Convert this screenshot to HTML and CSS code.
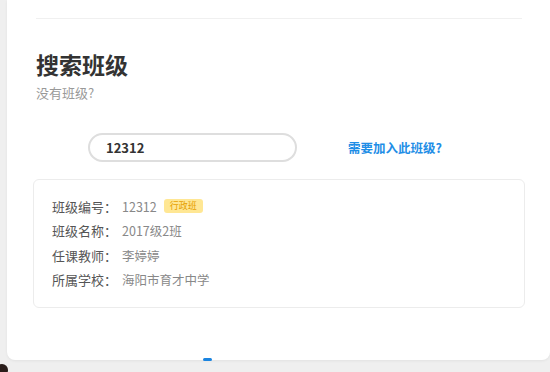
FILE: index.html
```html
<!DOCTYPE html>
<html lang="zh-CN">
<head>
    <meta charset="UTF-8">
    <title>搜索班级</title>
    <link rel="stylesheet" href="styles.css">
</head>
<body>
    <div class="panel">
        <div class="divider"></div>

        <h1 class="search-title">搜索班级</h1>
        <p class="search-subtitle">没有班级?</p>

        <div class="search-row">
            <input class="search-input" type="text" value="12312">
            <a class="join-link" href="#">需要加入此班级?</a>
        </div>

        <div class="class-info">
            <div class="info-row">
                <span class="info-label">班级编号：</span>
                <span class="info-value">12312</span>
                <span class="tag">行政班</span>
            </div>
            <div class="info-row">
                <span class="info-label">班级名称：</span>
                <span class="info-value">2017级2班</span>
            </div>
            <div class="info-row">
                <span class="info-label">任课教师：</span>
                <span class="info-value">李婷婷</span>
            </div>
            <div class="info-row">
                <span class="info-label">所属学校：</span>
                <span class="info-value">海阳市育才中学</span>
            </div>
        </div>
    </div>
    <div class="page-bottom">
        <span class="dot-dark"></span>
        <span class="dot-blue"></span>
    </div>
</body>
</html>
```

FILE: styles.css
```css
* {
    margin: 0;
    padding: 0;
    box-sizing: border-box;
}

body {
    font-family: 'Noto Sans CJK SC', 'Noto Sans', sans-serif;
    background: #efefef;
    width: 550px;
    height: 372px;
    overflow: hidden;
}

.panel {
    margin-left: 7px;
    height: 360px;
    background: #fff;
    border-radius: 0 0 8px 8px;
    padding: 18px 25px 0 26px;
    box-shadow: 0 1px 3px rgba(0, 0, 0, 0.06);
}

.divider {
    height: 1px;
    background: #f0f0f0;
    margin: 0 3px 0 3px;
}

.search-title {
    font-size: 23px;
    font-weight: bold;
    color: #333;
    line-height: 32px;
    margin: 29px 0 0 3px;
}

.search-subtitle {
    font-size: 13px;
    color: #999;
    line-height: 18px;
    margin: 4px 0 0 3px;
}

.search-row {
    display: flex;
    align-items: center;
    gap: 51px;
    margin-top: 31px;
    padding-left: 55px;
}

.search-input {
    width: 209px;
    height: 29px;
    border: 2px solid #dedede;
    border-radius: 15px;
    padding: 0 16px;
    font-family: 'Noto Sans CJK SC', sans-serif;
    font-size: 13px;
    font-weight: 600;
    color: #333;
    outline: none;
}

.join-link {
    font-size: 12.5px;
    font-weight: bold;
    color: #1f8ee6;
    text-decoration: none;
}

.class-info {
    margin-top: 17px;
    border: 1px solid #ececec;
    border-radius: 6px;
    padding: 14px 18px 15px 18px;
}

.info-row {
    display: flex;
    align-items: center;
    height: 24.5px;
    font-size: 13px;
}

.info-label {
    color: #555;
    width: 70px;
}

.info-value {
    color: #888;
    font-size: 12.5px;
}

.tag {
    margin-left: 7px;
    background: #ffe794;
    color: #e6a000;
    font-size: 9px;
    line-height: 14px;
    padding: 0 6px;
    border-radius: 3px;
}

.page-bottom {
    position: relative;
    height: 12px;
}

.dot-dark {
    position: absolute;
    left: -4px;
    top: 4px;
    width: 12px;
    height: 12px;
    border-radius: 50%;
    background: #2a1d1a;
}

.dot-blue {
    position: absolute;
    left: 203px;
    top: -2px;
    width: 9px;
    height: 3px;
    border-radius: 2px;
    background: #1a84e0;
}
```
